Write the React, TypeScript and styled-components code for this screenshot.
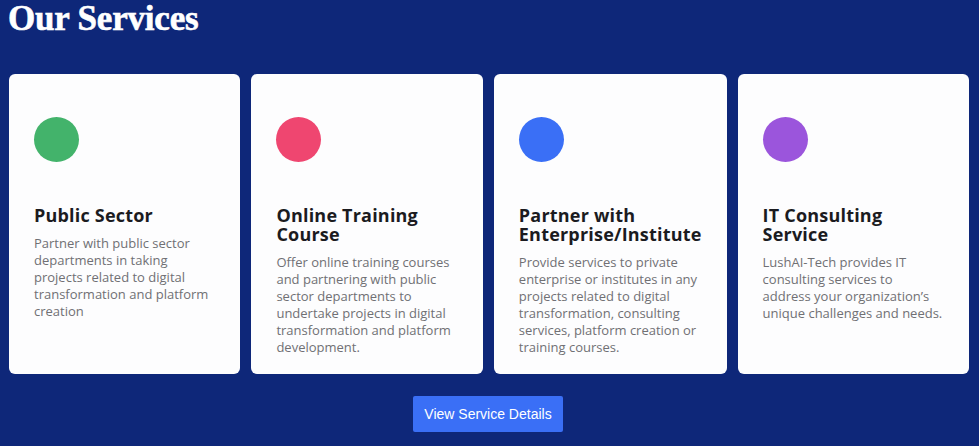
import React from "react";
import styled, { createGlobalStyle } from "styled-components";

const Global = createGlobalStyle`
  html, body { margin: 0; padding: 0; background: #0e2779; }
  body { font-family: "Open Sans", sans-serif; }
`;

const Page = styled.section`
  width: 979px;
  height: 446px;
  box-sizing: border-box;
  padding: 0 10px 0 9px;
  display: flex;
  flex-direction: column;
  background: #0e2779;
  overflow: hidden;
`;

const Heading = styled.h1`
  margin: 0 0 0 -1px;
  font-family: "Liberation Serif", serif;
  font-weight: 700;
  font-size: 35px;
  line-height: 38px;
  letter-spacing: -0.2px;
  color: #ffffff;
  -webkit-text-stroke: 0.6px #ffffff;
`;

const Grid = styled.div`
  margin-top: 36px;
  display: grid;
  grid-template-columns: repeat(4, 1fr);
  gap: 11px;
`;

const Card = styled.article`
  height: 300px;
  box-sizing: border-box;
  background: #fdfdfe;
  border-radius: 6px;
  padding: 43px 25px 0 25px;
  display: flex;
  flex-direction: column;
`;

const Dot = styled.div<{ $color: string }>`
  width: 45px;
  height: 45px;
  border-radius: 50%;
  background: ${(p) => p.$color};
  flex: none;
`;

const Title = styled.h3`
  margin: 44px 0 0 0;
  font-family: "Open Sans", sans-serif;
  font-weight: 700;
  font-size: 18px;
  line-height: 19px;
  letter-spacing: 0.2px;
  color: #1b1b1f;
`;

const Desc = styled.p`
  margin: 10px 0 0 0;
  font-family: "Open Sans", sans-serif;
  font-size: 13px;
  line-height: 17px;
  color: #707074;
`;

const Footer = styled.div`
  display: flex;
  justify-content: center;
  margin-top: 22px;
`;

const Button = styled.button`
  width: 150px;
  height: 36px;
  border: none;
  border-radius: 2px;
  background: #3a6ff6;
  color: #ffffff;
  font-family: "Liberation Sans", Arial, sans-serif;
  font-size: 14px;
  cursor: pointer;
  margin-left: -2px;
`;

const services = [
  {
    color: "#43b36b",
    title: "Public Sector",
    desc: "Partner with public sector departments in taking projects related to digital transformation and platform creation",
  },
  {
    color: "#ef4670",
    title: "Online Training Course",
    desc: "Offer online training courses and partnering with public sector departments to undertake projects in digital transformation and platform development.",
  },
  {
    color: "#3a6ff6",
    title: "Partner with Enterprise/Institute",
    desc: "Provide services to private enterprise or institutes in any projects related to digital transformation, consulting services, platform creation or training courses.",
  },
  {
    color: "#9b55dc",
    title: "IT Consulting Service",
    desc: "LushAI-Tech provides IT consulting services to address your organization’s unique challenges and needs.",
  },
];

export default function App() {
  return (
    <>
      <Global />
      <Page>
        <Heading>Our Services</Heading>
        <Grid>
          {services.map((s) => (
            <Card key={s.title}>
              <Dot $color={s.color} />
              <Title>{s.title}</Title>
              <Desc>{s.desc}</Desc>
            </Card>
          ))}
        </Grid>
        <Footer>
          <Button>View Service Details</Button>
        </Footer>
      </Page>
    </>
  );
}
